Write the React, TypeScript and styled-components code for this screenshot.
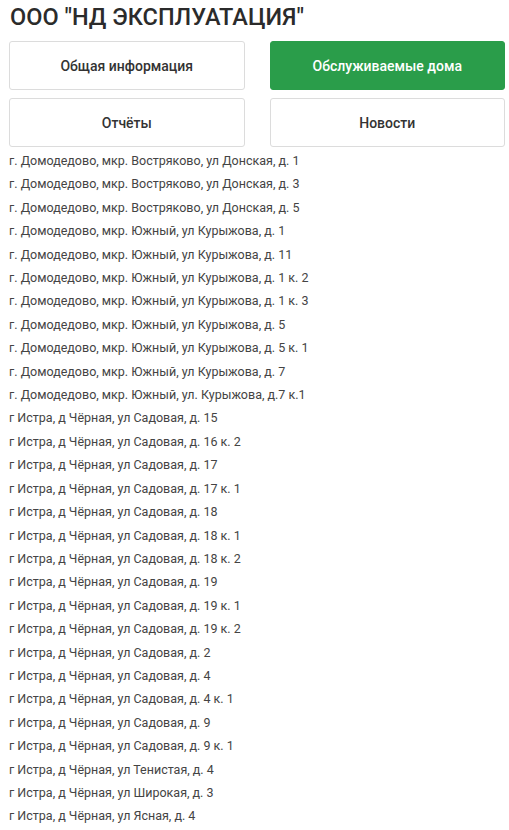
import styled, { createGlobalStyle } from "styled-components";

const GlobalStyle = createGlobalStyle`
    html, body {
        margin: 0;
        padding: 0;
        background: #fff;
    }
    body {
        font-family: Roboto, "Liberation Sans", Arial, sans-serif;
        color: #333;
    }
`

const Page = styled.div`
    padding: 4px 4px 0 9px;
`

const Title = styled.h1`
    margin: 0 0 10px 1px;
    font-size: 23.5px;
    line-height: 27px;
    font-weight: 500;
    color: #2b2b2b;
`

const Tabs = styled.div`
    display: grid;
    grid-template-columns: 1fr 1fr;
    column-gap: 25px;
    row-gap: 8px;
`

const Tab = styled.button<{ $active?: boolean }>`
    height: 49px;
    border: 1px solid ${p => p.$active ? "#2a9d4a" : "#dcdcdc"};
    border-radius: 3px;
    background: ${p => p.$active ? "#2a9d4a" : "#fff"};
    color: ${p => p.$active ? "#fff" : "#333"};
    font-family: Roboto, "Liberation Sans", Arial, sans-serif;
    font-size: 14px;
    font-weight: 500;
    cursor: pointer;
`

const List = styled.ul`
    list-style: none;
    margin: 2px 0 0;
    padding: 0;
`

const Item = styled.li`
    font-size: 12.5px;
    line-height: 23.4px;
    color: #444;
`

const tabs = ["Общая информация", "Обслуживаемые дома", "Отчёты", "Новости"];

const houses = [
    "г. Домодедово, мкр. Востряково, ул Донская, д. 1",
    "г. Домодедово, мкр. Востряково, ул Донская, д. 3",
    "г. Домодедово, мкр. Востряково, ул Донская, д. 5",
    "г. Домодедово, мкр. Южный, ул Курыжова, д. 1",
    "г. Домодедово, мкр. Южный, ул Курыжова, д. 11",
    "г. Домодедово, мкр. Южный, ул Курыжова, д. 1 к. 2",
    "г. Домодедово, мкр. Южный, ул Курыжова, д. 1 к. 3",
    "г. Домодедово, мкр. Южный, ул Курыжова, д. 5",
    "г. Домодедово, мкр. Южный, ул Курыжова, д. 5 к. 1",
    "г. Домодедово, мкр. Южный, ул Курыжова, д. 7",
    "г. Домодедово, мкр. Южный, ул. Курыжова, д.7 к.1",
    "г Истра, д Чёрная, ул Садовая, д. 15",
    "г Истра, д Чёрная, ул Садовая, д. 16 к. 2",
    "г Истра, д Чёрная, ул Садовая, д. 17",
    "г Истра, д Чёрная, ул Садовая, д. 17 к. 1",
    "г Истра, д Чёрная, ул Садовая, д. 18",
    "г Истра, д Чёрная, ул Садовая, д. 18 к. 1",
    "г Истра, д Чёрная, ул Садовая, д. 18 к. 2",
    "г Истра, д Чёрная, ул Садовая, д. 19",
    "г Истра, д Чёрная, ул Садовая, д. 19 к. 1",
    "г Истра, д Чёрная, ул Садовая, д. 19 к. 2",
    "г Истра, д Чёрная, ул Садовая, д. 2",
    "г Истра, д Чёрная, ул Садовая, д. 4",
    "г Истра, д Чёрная, ул Садовая, д. 4 к. 1",
    "г Истра, д Чёрная, ул Садовая, д. 9",
    "г Истра, д Чёрная, ул Садовая, д. 9 к. 1",
    "г Истра, д Чёрная, ул Тенистая, д. 4",
    "г Истра, д Чёрная, ул Широкая, д. 3",
    "г Истра, д Чёрная, ул Ясная, д. 4",
];

const App = () => {
    return (
        <>
            <GlobalStyle />
            <Page>
                <Title>ООО "НД ЭКСПЛУАТАЦИЯ"</Title>
                <Tabs>
                    {tabs.map(t => (
                        <Tab key={t} $active={t === "Обслуживаемые дома"}>{t}</Tab>
                    ))}
                </Tabs>
                <List>
                    {houses.map(h => <Item key={h}>{h}</Item>)}
                </List>
            </Page>
        </>
    )
}

export default App;
